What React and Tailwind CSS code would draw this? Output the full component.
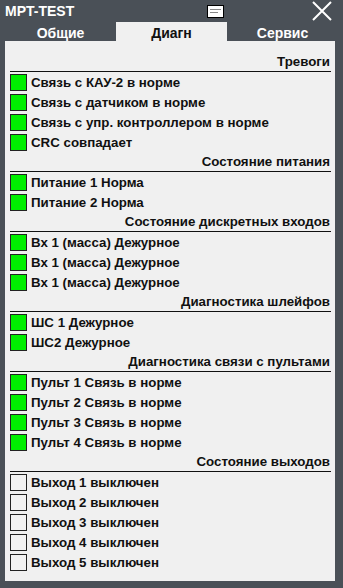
import React from 'react';

const sections = [
    {
        title: 'Тревоги',
        items: [
            ['Связь с КАУ-2 в норме', true],
            ['Связь с датчиком в норме', true],
            ['Связь с упр. контроллером в норме', true],
            ['CRC совпадает', true],
        ],
    },
    {
        title: 'Состояние питания',
        items: [
            ['Питание 1 Норма', true],
            ['Питание 2 Норма', true],
        ],
    },
    {
        title: 'Состояние дискретных входов',
        items: [
            ['Вх 1 (масса) Дежурное', true],
            ['Вх 1 (масса) Дежурное', true],
            ['Вх 1 (масса) Дежурное', true],
        ],
    },
    {
        title: 'Диагностика шлейфов',
        items: [
            ['ШС 1 Дежурное', true],
            ['ШС2 Дежурное', true],
        ],
    },
    {
        title: 'Диагностика связи с пультами',
        items: [
            ['Пульт 1 Связь в норме', true],
            ['Пульт 2 Связь в норме', true],
            ['Пульт 3 Связь в норме', true],
            ['Пульт 4 Связь в норме', true],
        ],
    },
    {
        title: 'Состояние выходов',
        items: [
            ['Выход 1 выключен', false],
            ['Выход 2 выключен', false],
            ['Выход 3 выключен', false],
            ['Выход 4 выключен', false],
            ['Выход 5 выключен', false],
        ],
    },
];

function Row({ label, on }) {
    return (
        <div className="flex items-center h-5 gap-1">
            <div className={`w-[17px] h-[17px] border border-[#222] ${on ? 'bg-[#00ee00]' : 'bg-[#f2f2f2]'}`} />
            <span className="pt-[1px]">{label}</span>
        </div>
    );
}

export default function App() {
    return (
        <div className="w-[343px] h-[588px] bg-[#4a5057] flex flex-col font-['Liberation_Sans',Arial,sans-serif] font-bold text-[13.3px] leading-none select-none">
            {/* title bar */}
            <div className="h-[22px] flex items-center pl-[5px] pr-[11px] text-white text-[14px]">
                <span className="flex-1">MPT-TEST</span>
                <div className="w-[17px] h-[13px] mr-[88px] bg-white border border-black flex flex-col justify-center gap-[2px] px-[2px]">
                    <div className="h-px bg-[#888] w-full" />
                    <div className="h-px bg-[#888] w-[8px]" />
                </div>
                <svg width="20" height="20" viewBox="0 0 20 20">
                    <path d="M1 1 L19 19 M19 1 L1 19" stroke="white" strokeWidth="2" fill="none" />
                </svg>
            </div>

            {/* tabs */}
            <div className="mx-[5px] flex h-[19px] text-[14px]">
                <div className="flex-1 flex items-center justify-center pt-[2px] text-white">Общие</div>
                <div className="flex-1 flex items-center justify-center pt-[2px] text-[#111] bg-[#f0f0f0]">Диагн</div>
                <div className="flex-1 flex items-center justify-center pt-[2px] text-white">Сервис</div>
            </div>

            {/* content */}
            <div className="mx-[5px] w-[330px] h-[540px] bg-[#f0f0f0] pt-[11px] pl-[5px] pr-[4px] text-[#111]">
                {sections.map((s) => (
                    <div key={s.title}>
                        <div className="h-5 flex items-center justify-end border-b-[1.5px] border-[#111]">
                            <span className="pr-[1px]">{s.title}</span>
                        </div>
                        {s.items.map(([label, on], i) => (
                            <Row key={i} label={label} on={on} />
                        ))}
                    </div>
                ))}
            </div>
        </div>
    );
}
